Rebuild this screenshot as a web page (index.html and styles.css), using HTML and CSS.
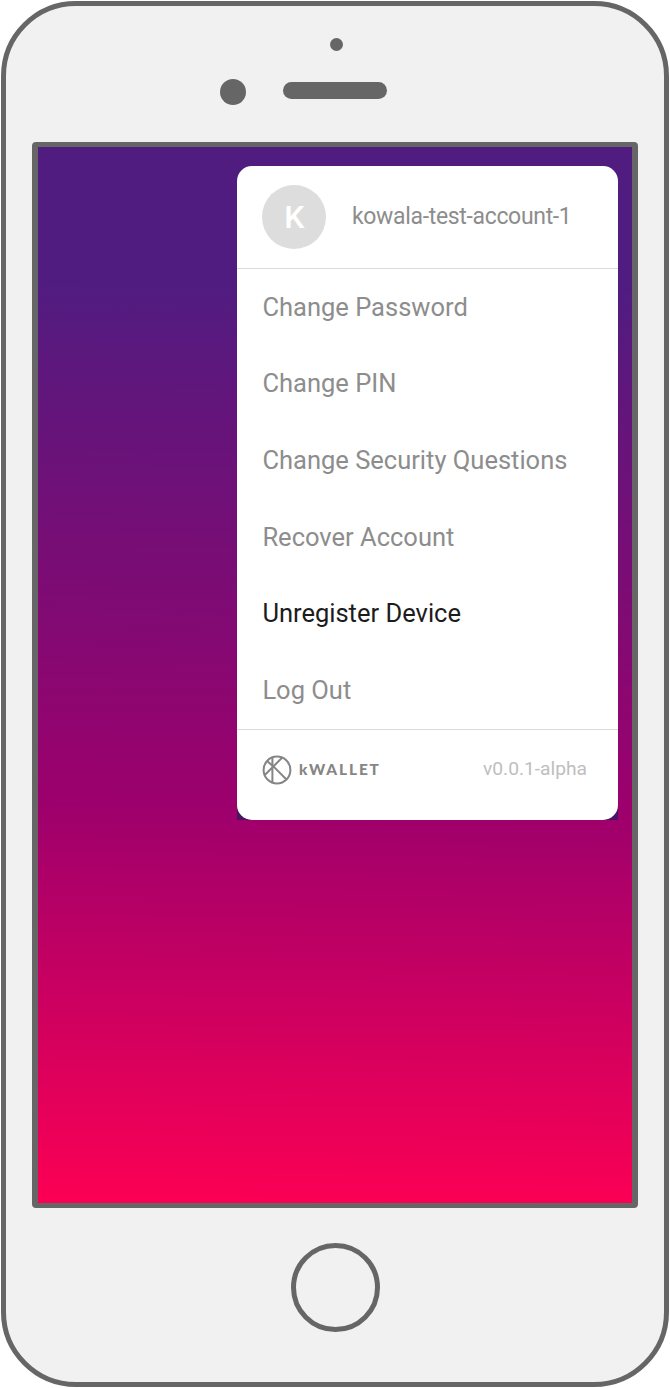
FILE: index.html
```html
<!DOCTYPE html>
<html lang="en">
<head>
<meta charset="utf-8">
<title>kWallet menu</title>
<link rel="stylesheet" href="styles.css">
</head>
<body>
<main class="phone">
  <header class="phone-top">
    <span class="sensor"></span>
    <div class="earpiece">
      <span class="camera"></span>
      <span class="speaker"></span>
    </div>
  </header>
  <section class="screen">
    <div class="menu-backing">
      <nav class="menu">
        <div class="account">
          <span class="avatar">K</span>
          <span class="account-name">kowala-test-account-1</span>
        </div>
        <ul class="items">
          <li class="item">Change Password</li>
          <li class="item">Change PIN</li>
          <li class="item">Change Security Questions</li>
          <li class="item">Recover Account</li>
          <li class="item active">Unregister Device</li>
          <li class="item">Log Out</li>
        </ul>
        <footer class="menu-footer">
          <svg class="logo" viewBox="0 0 30 30" fill="none" stroke="#858585" stroke-width="2">
            <circle cx="15" cy="15" r="13.4"/>
            <path d="M10.4 2.5V27.5M20.3 2.5L2.8 20M5 6L11.4 11.4L24.7 24.8"/>
          </svg>
          <span class="brand">kWALLET</span>
          <span class="version">v0.0.1-alpha</span>
        </footer>
      </nav>
    </div>
  </section>
  <div class="home-button"></div>
</main>
</body>
</html>
```
FILE: styles.css
```css
* { box-sizing: border-box; }
body {
  margin: 0;
  padding: 1px;
  background: #fff;
  font-family: Roboto, sans-serif;
}
.phone {
  display: flex;
  flex-direction: column;
  align-items: center;
  width: 668px;
  height: 1386px;
  border: 5px solid #666;
  border-radius: 75px;
  background: #f1f1f1;
}
.phone-top {
  display: flex;
  flex-direction: column;
  align-items: center;
  width: 100%;
  height: 136px;
  padding-top: 32px;
}
.sensor {
  width: 13px;
  height: 13px;
  margin-left: 2px;
  border-radius: 50%;
  background: #666;
}
.earpiece {
  display: flex;
  align-items: center;
  gap: 37px;
  width: 100%;
  margin-top: 28px;
  padding-left: 214px;
}
.camera {
  width: 26px;
  height: 26px;
  border-radius: 50%;
  background: #666;
}
.speaker {
  width: 104px;
  height: 17px;
  margin-bottom: 3px;
  border-radius: 9px;
  background: #666;
}
.screen {
  display: flex;
  justify-content: flex-end;
  align-items: flex-start;
  flex: none;
  width: 606px;
  height: 1066px;
  border: solid #666;
  border-width: 5px 6px;
  border-radius: 4px;
  padding: 19px 14px 0 0;
  background: linear-gradient(180.8deg, #501c80 0%, #501c80 13%, #9d006c 62.5%, #fb0054 99.5%) padding-box #666;
}
.menu-backing {
  background: linear-gradient(transparent 50%, #4c1264 50%);
}
.menu {
  width: 381px;
  height: 654px;
  border-radius: 15px;
  background: #fff;
}
.account {
  display: flex;
  align-items: center;
  gap: 25.6px;
  height: 103px;
  padding-left: 25.4px;
  border-bottom: 1px solid #dadada;
}
.avatar {
  display: flex;
  align-items: center;
  justify-content: center;
  width: 64px;
  height: 64px;
  border-radius: 50%;
  background: #ddd;
  color: #fff;
  font-size: 32px;
  font-weight: 500;
}
.account-name {
  padding-bottom: 1px;
  color: #8d8d8d;
  font-size: 23px;
  letter-spacing: -0.33px;
}
.items {
  margin: 0;
  padding: 0;
  list-style: none;
}
.item {
  display: flex;
  align-items: center;
  height: 76.6px;
  padding: 0 0 1px 25.4px;
  color: #8d8d8d;
  font-size: 25.5px;
  white-space: nowrap;
}
.item.active { color: #1c1c1c; }
.menu-footer {
  display: flex;
  align-items: center;
  height: 81px;
  padding: 0 31px 0 25px;
  border-top: 1px solid #dadada;
}
.logo { width: 30px; height: 30px; }
.brand {
  margin: 0 0 1px 7px;
  color: #858585;
  font-family: Lato, sans-serif;
  font-size: 15.4px;
  font-weight: 900;
  letter-spacing: 1.9px;
}
.version {
  margin: 0 0 2px auto;
  color: #bebebe;
  font-size: 19.2px;
}
.home-button {
  flex: none;
  width: 89px;
  height: 89px;
  margin-top: 35px;
  border: 5.5px solid #666;
  border-radius: 50%;
}
```
